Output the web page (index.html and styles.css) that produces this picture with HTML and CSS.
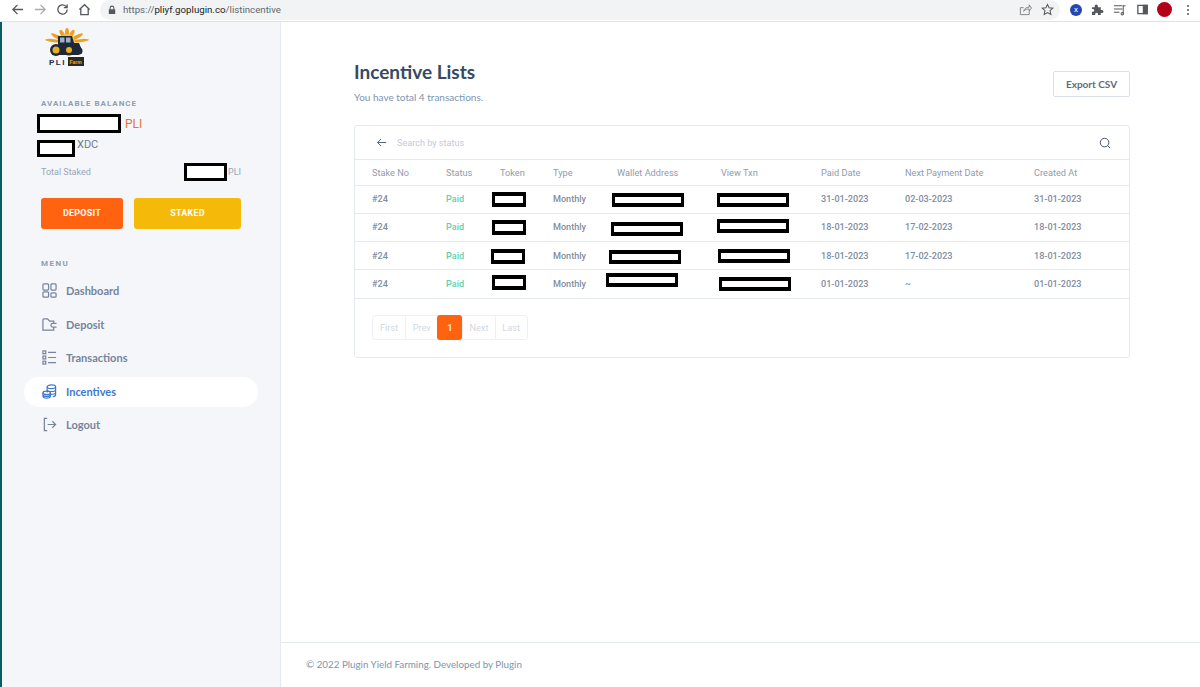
FILE: index.html
```html
<!DOCTYPE html>
<html lang="en">
<head>
  <meta charset="UTF-8">
  <meta name="viewport" content="width=device-width, initial-scale=1.0">
  <title>Incentive Lists</title>
  <link rel="stylesheet" href="styles.css">
</head>
<body>

<div class="toolbar">
  <svg class="tool tool-back" viewBox="0 0 14 14"><path d="M13 7H2M7 2 2 7l5 5"/></svg>
  <svg class="tool tool-forward" viewBox="0 0 14 14"><path d="M1 7h11M7 2l5 5-5 5"/></svg>
  <svg class="tool tool-reload" viewBox="0 0 14 14"><path d="M12 7a5 5 0 1 1-1.500-3.600L12 5M12 1.500V5H8.500"/></svg>
  <svg class="tool tool-home" viewBox="0 0 14 14"><path d="M1.500 7 7 1.800 12.500 7M3 6v6.500h8V6"/></svg>
  <div class="omnibox">
    <svg class="lock" viewBox="0 0 10 12"><path d="M2 5V3.500a3 3 0 0 1 6 0V5h1v6H1V5zM3.300 5h3.400V3.500a1.700 1.700 0 0 0-3.400 0z"/></svg>
    <span class="url">https://<b>pliyf.goplugin.co</b>/listincentive</span>
    <svg class="tool tool-share" viewBox="0 0 14 14"><path d="M11 8v4.500H1.500V5H5M5 9c.5-3 3-4.500 6-4.500V2l2.500 3.500L11 8.500V6.500C8.500 6.300 6.500 7 5 9z"/></svg>
    <svg class="tool tool-star" viewBox="0 0 14 14"><path d="m7 1.500 1.700 3.700 4 .4-3 2.700.9 4L7 10.300l-3.600 2 .9-4-3-2.700 4-.4z"/></svg>
  </div>
  <div class="ext-x">x</div>
  <svg class="tool tool-puzzle" viewBox="0 0 14 14"><path d="M1 4.500h3V3.200a1.700 1.700 0 0 1 3.400 0v1.300h3.100v3h1.200a1.700 1.700 0 0 1 0 3.400h-1.200V13h-3v-1a1.500 1.500 0 0 0-3 0v1H1V9.500h1a1.500 1.500 0 0 0 0-3H1z"/></svg>
  <svg class="tool tool-media" viewBox="0 0 14 14"><path d="M1 3h9M1 6.500h9M1 10h6M11 12V3h2.500"/><circle cx="10" cy="11.500" r="1.300"/></svg>
  <svg class="tool tool-panel" viewBox="0 0 14 14"><path d="M2 2.500h10v9H2z"/><path class="panel-fill" d="M8 2.500h4v9H8z"/></svg>
  <div class="avatar"></div>
  <div class="dots"><i></i><i></i><i></i></div>
</div>

<div class="layout">
  <aside class="sidebar">
    <svg class="logo" viewBox="0 0 48 40">
      <g fill="#f0a020">
        <ellipse cx="24" cy="5" rx="2" ry="5"/>
        <ellipse cx="24" cy="5" rx="2" ry="5" transform="rotate(-30 24 14)"/>
        <ellipse cx="24" cy="5" rx="2" ry="5" transform="rotate(30 24 14)"/>
        <ellipse cx="24" cy="3" rx="1.800" ry="7" transform="rotate(-62 24 14)"/>
        <ellipse cx="24" cy="3" rx="1.800" ry="7" transform="rotate(62 24 14)"/>
        <ellipse cx="24" cy="1" rx="1.500" ry="9" transform="rotate(-84 24 14)"/>
        <ellipse cx="24" cy="1" rx="1.500" ry="9" transform="rotate(84 24 14)"/>
      </g>
      <circle cx="24" cy="14" r="8" fill="#f7c040"/>
      <path d="M15 8h14l2 7h5l3 7-3 5H10l2-8h3z" fill="#1f2838"/>
      <path d="M17 9.500h4.500v5H17zM23 9.500h4.500v5H23z" fill="#9fb0c8"/>
      <circle cx="13" cy="22" r="6" fill="#1f2838"/>
      <circle cx="13" cy="22" r="3.500" fill="#e8b020"/>
      <circle cx="26" cy="22" r="5.500" fill="#1f2838"/>
      <circle cx="26" cy="22" r="3" fill="#e8b020"/>
      <circle cx="36" cy="23" r="3.500" fill="#1f2838"/>
      <text class="logo-pli" x="6" y="37">PLI</text>
      <rect x="25" y="29" width="16" height="9" fill="#2a2a22"/>
      <text class="logo-farm" x="26.500" y="36">Farm</text>
    </svg>

    <div class="side-label balance-label">AVAILABLE BALANCE</div>
    <div class="bal-row">
      <span class="mark mark-pli"></span>
      <span class="bal-pli">PLI</span>
    </div>
    <div class="bal-row-xdc">
      <span class="mark mark-xdc"></span>
      <span class="bal-xdc">XDC</span>
    </div>
    <div class="staked-row">
      <span class="staked-label">Total Staked</span>
      <span class="staked-val"><span class="mark mark-staked"></span>PLI</span>
    </div>
    <div class="btn-row">
      <a class="btn btn-deposit">DEPOSIT</a>
      <a class="btn btn-staked">STAKED</a>
    </div>

    <div class="side-label menu-label">MENU</div>
    <nav class="menu">
      <a class="menu-item">
        <svg class="menu-icon" viewBox="0 0 16 16"><rect x="1" y="1" width="6" height="6.500" rx="1"/><rect x="9.500" y="1" width="5.500" height="6.500" rx="1"/><rect x="1" y="9.500" width="6" height="5.500" rx="1"/><rect x="9.500" y="10.500" width="5.500" height="4.500" rx="1"/></svg>
        Dashboard
      </a>
      <a class="menu-item">
        <svg class="menu-icon" viewBox="0 0 16 16"><path d="M12.500 11v3H1V3a1 1 0 0 1 1-1h4l2 2.500h4.500V6.500"/><path d="M15.500 6.800h-4a2 2 0 0 0 0 4h4"/></svg>
        Deposit
      </a>
      <a class="menu-item">
        <svg class="menu-icon" viewBox="0 0 16 16"><rect x="1" y="1" width="3" height="3"/><rect x="1" y="6.500" width="3" height="3"/><rect x="1" y="12" width="3" height="3"/><path d="M6.500 2.500H15M6.500 8H15M6.500 13.500H15"/></svg>
        Transactions
      </a>
      <a class="menu-item active">
        <svg class="menu-icon" viewBox="0 0 16 16"><ellipse cx="10" cy="3" rx="4.500" ry="2"/><path d="M5.500 3v6M14.500 3v8.500c0 1-1 1.800-3 2M5.500 6c0 1.200 2 2 4.500 2s4.500-.8 4.500-2M9 11c2.500 0 5.500-.5 5.500-2"/><ellipse cx="5" cy="9.500" rx="4" ry="1.800"/><path d="M1 9.500V13c0 1 1.800 2 4 2s4-1 4-2V9.500M1 11.500c0 1 1.800 1.800 4 1.800s4-.8 4-1.800"/></svg>
        Incentives
      </a>
      <a class="menu-item">
        <svg class="menu-icon" viewBox="0 0 16 16"><path d="M5.500 1.500H2.500v13h3M6 8h8.500M11 4.500 14.500 8 11 11.500"/></svg>
        Logout
      </a>
    </nav>
  </aside>

  <main class="main">
    <div class="content">
      <div class="page-head">
        <div>
          <h1>Incentive Lists</h1>
          <p class="subtitle">You have total 4 transactions.</p>
        </div>
        <a class="export-btn">Export CSV</a>
      </div>

      <div class="card">
        <div class="search-row">
          <svg class="search-back" viewBox="0 0 14 14"><path d="M13 7H2M6.500 2.500 2 7l4.500 4.500"/></svg>
          <span class="search-hint">Search by status</span>
          <svg class="search-icon" viewBox="0 0 14 14"><circle cx="6.500" cy="6.500" r="5"/><path d="m10 10 3 3"/></svg>
        </div>

        <table class="list">
          <thead>
            <tr>
              <th class="c1">Stake No</th>
              <th class="c2">Status</th>
              <th class="c3">Token</th>
              <th class="c4">Type</th>
              <th class="c5">Wallet Address</th>
              <th class="c6">View Txn</th>
              <th class="c7">Paid Date</th>
              <th class="c8">Next Payment Date</th>
              <th>Created At</th>
            </tr>
          </thead>
          <tbody>
            <tr><td>#24</td><td class="paid">Paid</td><td></td><td>Monthly</td><td></td><td></td><td>31-01-2023</td><td>02-03-2023</td><td>31-01-2023</td></tr>
            <tr><td>#24</td><td class="paid">Paid</td><td></td><td>Monthly</td><td></td><td></td><td>18-01-2023</td><td>17-02-2023</td><td>18-01-2023</td></tr>
            <tr><td>#24</td><td class="paid">Paid</td><td></td><td>Monthly</td><td></td><td></td><td>18-01-2023</td><td>17-02-2023</td><td>18-01-2023</td></tr>
            <tr><td>#24</td><td class="paid">Paid</td><td></td><td>Monthly</td><td></td><td></td><td>01-01-2023</td><td>~</td><td>01-01-2023</td></tr>
          </tbody>
        </table>

        <div class="pager">
          <a>First</a><a>Prev</a><a class="current">1</a><a>Next</a><a>Last</a>
        </div>

        <!-- black boxes drawn over the table -->
        <span class="mark over t1"></span>
        <span class="mark over t2"></span>
        <span class="mark over t3"></span>
        <span class="mark over t4"></span>
        <span class="mark over w1"></span>
        <span class="mark over w2"></span>
        <span class="mark over w3"></span>
        <span class="mark over w4"></span>
        <span class="mark over v1"></span>
        <span class="mark over v2"></span>
        <span class="mark over v3"></span>
        <span class="mark over v4"></span>
      </div>
    </div>

    <footer class="footer">© 2022 Plugin Yield Farming. Developed by Plugin</footer>
  </main>
</div>

</body>
</html>
```

FILE: styles.css
```css
* {
  box-sizing: border-box;
}
html,
body {
  height: 100%;
}
body {
  margin: 0;
  display: flex;
  flex-direction: column;
  overflow: hidden;
  background-color: white;
  font-family: Roboto, Arial, sans-serif;
  color: #8094ae;
}

/* browser bar */
.toolbar {
  height: 22px;
  flex: none;
  display: flex;
  align-items: center;
  background-color: white;
  border-bottom: 1px solid #dfe1e5;
  padding-bottom: 2px;
}
.tool {
  width: 13px;
  height: 13px;
  flex: none;
  fill: none;
  stroke: #55585d;
  stroke-width: 1.4;
}
.tool-back {
  margin-left: 11px;
}
.tool-forward {
  margin-left: 10px;
  stroke: #a9acb0;
}
.tool-reload {
  margin-left: 9px;
}
.tool-home {
  margin-left: 9px;
}
.omnibox {
  width: 960px;
  height: 20px;
  margin-left: 9px;
  flex: none;
  display: flex;
  align-items: center;
  background-color: #f1f3f4;
  border-radius: 10px;
  padding-left: 8px;
}
.lock {
  width: 8px;
  height: 10px;
  fill: #55585d;
}
.url {
  margin-left: 7px;
  flex: 1;
  font-size: 9.700px;
  color: #63676c;
}
.url b {
  font-weight: normal;
  color: #202124;
}
.tool-share {
  stroke: #7d8085;
  stroke-width: 1;
}
.tool-star {
  margin: 0 6px 0 9px;
  stroke-width: 1.100;
}
.ext-x {
  width: 12px;
  height: 12px;
  margin-left: 10px;
  flex: none;
  border-radius: 50%;
  background-color: #2646b0;
  color: white;
  font-size: 8px;
  line-height: 11px;
  text-align: center;
}
.tool-puzzle {
  margin-left: 9px;
  fill: #55585d;
  stroke: none;
}
.tool-media {
  margin-left: 9px;
  stroke-width: 1.100;
}
.tool-panel {
  margin-left: 10px;
}
.panel-fill {
  fill: #55585d;
}
.avatar {
  width: 15px;
  height: 15px;
  margin-left: 8px;
  flex: none;
  border-radius: 50%;
  background-color: #b5001a;
}
.dots {
  margin-left: 15px;
  display: flex;
  flex-direction: column;
  gap: 2px;
}
.dots i {
  width: 2px;
  height: 2px;
  background-color: #55585d;
  border-radius: 50%;
}

/* page */
.layout {
  flex: 1;
  display: flex;
  min-height: 0;
  border-left: 2px solid #0b5a68;
}
.sidebar {
  width: 279px;
  flex: none;
  background-color: #f5f6fa;
  border-right: 1px solid #e5e9f2;
  padding: 6px 0 0 39px;
  font-family: Lato, sans-serif;
}
.logo {
  display: block;
  width: 48px;
  height: 40px;
  margin-left: 2px;
}
.logo-pli {
  font: bold 8px "Liberation Sans", sans-serif;
  letter-spacing: 1.500px;
  fill: #1c2a4a;
}
.logo-farm {
  font: bold 5px "Liberation Sans", sans-serif;
  fill: #e8b020;
}
.side-label {
  font-family: Roboto, sans-serif;
  font-size: 8px;
  font-weight: 700;
  letter-spacing: 1.450px;
  color: #8f9db3;
  line-height: 10px;
}
.balance-label {
  margin-top: 31px;
  letter-spacing: 1px;
}

.mark {
  display: inline-block;
  border: 3px solid black;
  background-color: white;
}
.bal-row {
  margin: 5px 0 0 -4px;
  display: flex;
  align-items: center;
  gap: 4px;
}
.mark-pli {
  width: 84px;
  height: 19px;
}
.bal-pli {
  font-family: Roboto, sans-serif;
  font-size: 12px;
  color: #e8743a;
}
.bal-row-xdc {
  margin: 7px 0 0 -4px;
  display: flex;
}
.mark-xdc {
  width: 38px;
  height: 17px;
}
.bal-xdc {
  margin: -2px 0 0 2px;
  font-family: Roboto, sans-serif;
  font-size: 11px;
  line-height: 14px;
  color: #707c90;
}
.staked-row {
  width: 200px;
  margin-top: 6px;
  display: flex;
  justify-content: space-between;
  align-items: center;
  font-family: Roboto, sans-serif;
  font-size: 9px;
  color: #99a5b8;
}
.staked-val {
  display: flex;
  align-items: center;
  gap: 1px;
}
.mark-staked {
  width: 43px;
  height: 18px;
}
.btn-row {
  margin-top: 17px;
  display: flex;
  gap: 11px;
}
.btn {
  height: 31px;
  border-radius: 3px;
  color: white;
  font-family: Roboto, sans-serif;
  font-size: 9px;
  font-weight: 700;
  line-height: 31px;
  text-align: center;
  letter-spacing: .2px;
}
.btn-deposit {
  width: 82px;
  background-color: #ff6310;
}
.btn-staked {
  width: 107px;
  background-color: #f5b90a;
}
.menu-label {
  margin-top: 30px;
}
.menu {
  margin: 5px 0 0 -17px;
  width: 234px;
  display: flex;
  flex-direction: column;
}
.menu-item {
  height: 33.500px;
  padding-left: 18px;
  display: flex;
  align-items: center;
  gap: 9px;
  font-size: 11px;
  font-weight: 700;
  color: #76849c;
  border-radius: 17px;
}
.menu-item.active {
  height: 30px;
  margin: 2px 0 1.500px;
  background-color: white;
  color: #3f78cf;
}
.menu-icon {
  width: 15px;
  height: 15px;
  flex: none;
  fill: none;
  stroke: currentColor;
  stroke-width: 1.300;
}

.main {
  flex: 1;
  min-width: 0;
  display: flex;
  flex-direction: column;
}
.content {
  flex: 1;
  padding: 38px 70px 0 73px;
}
.page-head {
  display: flex;
  justify-content: space-between;
  align-items: flex-start;
}
h1 {
  margin: 0;
  font-family: Lato, sans-serif;
  font-size: 19px;
  font-weight: 700;
  line-height: 24px;
  color: #364a63;
}
.subtitle {
  margin: 6px 0 0;
  font-family: Lato, sans-serif;
  font-size: 10px;
  line-height: 14px;
  color: #8094ae;
}
.export-btn {
  width: 77px;
  height: 26px;
  margin-top: 11px;
  background-color: white;
  border: 1px solid #dbdfea;
  border-radius: 2px;
  color: #5c6b82;
  font-family: Lato, sans-serif;
  font-size: 10px;
  font-weight: 700;
  line-height: 24px;
  text-align: center;
}

.card {
  position: relative;
  height: 233px;
  margin-top: 21px;
  border: 1px solid #e5e9f2;
  border-radius: 3px;
  background-color: white;
}
.search-row {
  height: 34px;
  display: flex;
  align-items: center;
  padding: 0 18px 0 21px;
  border-bottom: 1px solid #e5e9f2;
}
.search-back {
  width: 11px;
  height: 11px;
  fill: none;
  stroke: #3f4d63;
  stroke-width: 1.100;
}
.search-hint {
  flex: 1;
  margin-left: 10px;
  font-size: 9.100px;
  color: #c4cad8;
}
.search-icon {
  width: 12px;
  height: 12px;
  fill: none;
  stroke: #3f4d63;
  stroke-width: 1.100;
}

.list {
  width: 100%;
  table-layout: fixed;
  border-collapse: collapse;
  font-size: 9.200px;
}
.list th,
.list td {
  padding: 0 0 0 17px;
  text-align: left;
  border-bottom: 1px solid #e5e9f2;
  white-space: nowrap;
}
.list th {
  height: 25px;
  font-weight: 400;
  color: #8f9bad;
}
.list td {
  height: 28.250px;
  font-size: 9.100px;
  color: #7f8da1;
  font-weight: 500;
}
.list .paid {
  color: #62d0ac;
}
.c1 { width: 74px; }
.c2 { width: 54px; }
.c3 { width: 53px; }
.c4 { width: 64px; }
.c5 { width: 104px; }
.c6 { width: 100px; }
.c7 { width: 84px; }
.c8 { width: 129px; }

.pager {
  margin: 16px 0 0 17px;
  display: inline-flex;
  height: 25px;
  border: 1px solid #eef0f5;
  border-radius: 3px;
}
.pager a {
  width: 32.200px;
  border-left: 1px solid #eef0f5;
  font-size: 9.200px;
  line-height: 23px;
  text-align: center;
  color: #d3d8e2;
}
.pager a:first-child {
  border-left: none;
}
.pager .current {
  width: 25px;
  height: 25px;
  margin-top: -1px;
  border: none;
  border-radius: 3px;
  background-color: #ff6310;
  color: #ffe9dc;
  font-weight: 700;
  line-height: 25px;
}

/* redaction boxes, offsets from the card */
.over {
  position: absolute;
  border-width: 4px 3px;
}
.t1, .t2, .t3, .t4 {
  width: 34px;
  height: 15px;
}
.w1, .w2, .w3, .w4,
.v1, .v2, .v3, .v4 {
  width: 72px;
  height: 14px;
}
.t1 { left: 137px; top: 66px; }
.t2 { left: 137px; top: 94px; }
.t3 { left: 136px; top: 123px; }
.t4 { left: 137px; top: 149px; }
.w1 { left: 257px; top: 67px; }
.w2 { left: 256px; top: 96px; }
.w3 { left: 254px; top: 124px; }
.w4 { left: 251px; top: 147px; }
.v1 { left: 362px; top: 67px; }
.v2 { left: 362px; top: 93px; }
.v3 { left: 363px; top: 123px; }
.v4 { left: 364px; top: 151px; }

.footer {
  height: 45px;
  flex: none;
  border-top: 1px solid #e5e9f2;
  padding: 15px 0 0 25px;
  font-family: Lato, sans-serif;
  font-size: 9.800px;
  color: #8094ae;
}
```
